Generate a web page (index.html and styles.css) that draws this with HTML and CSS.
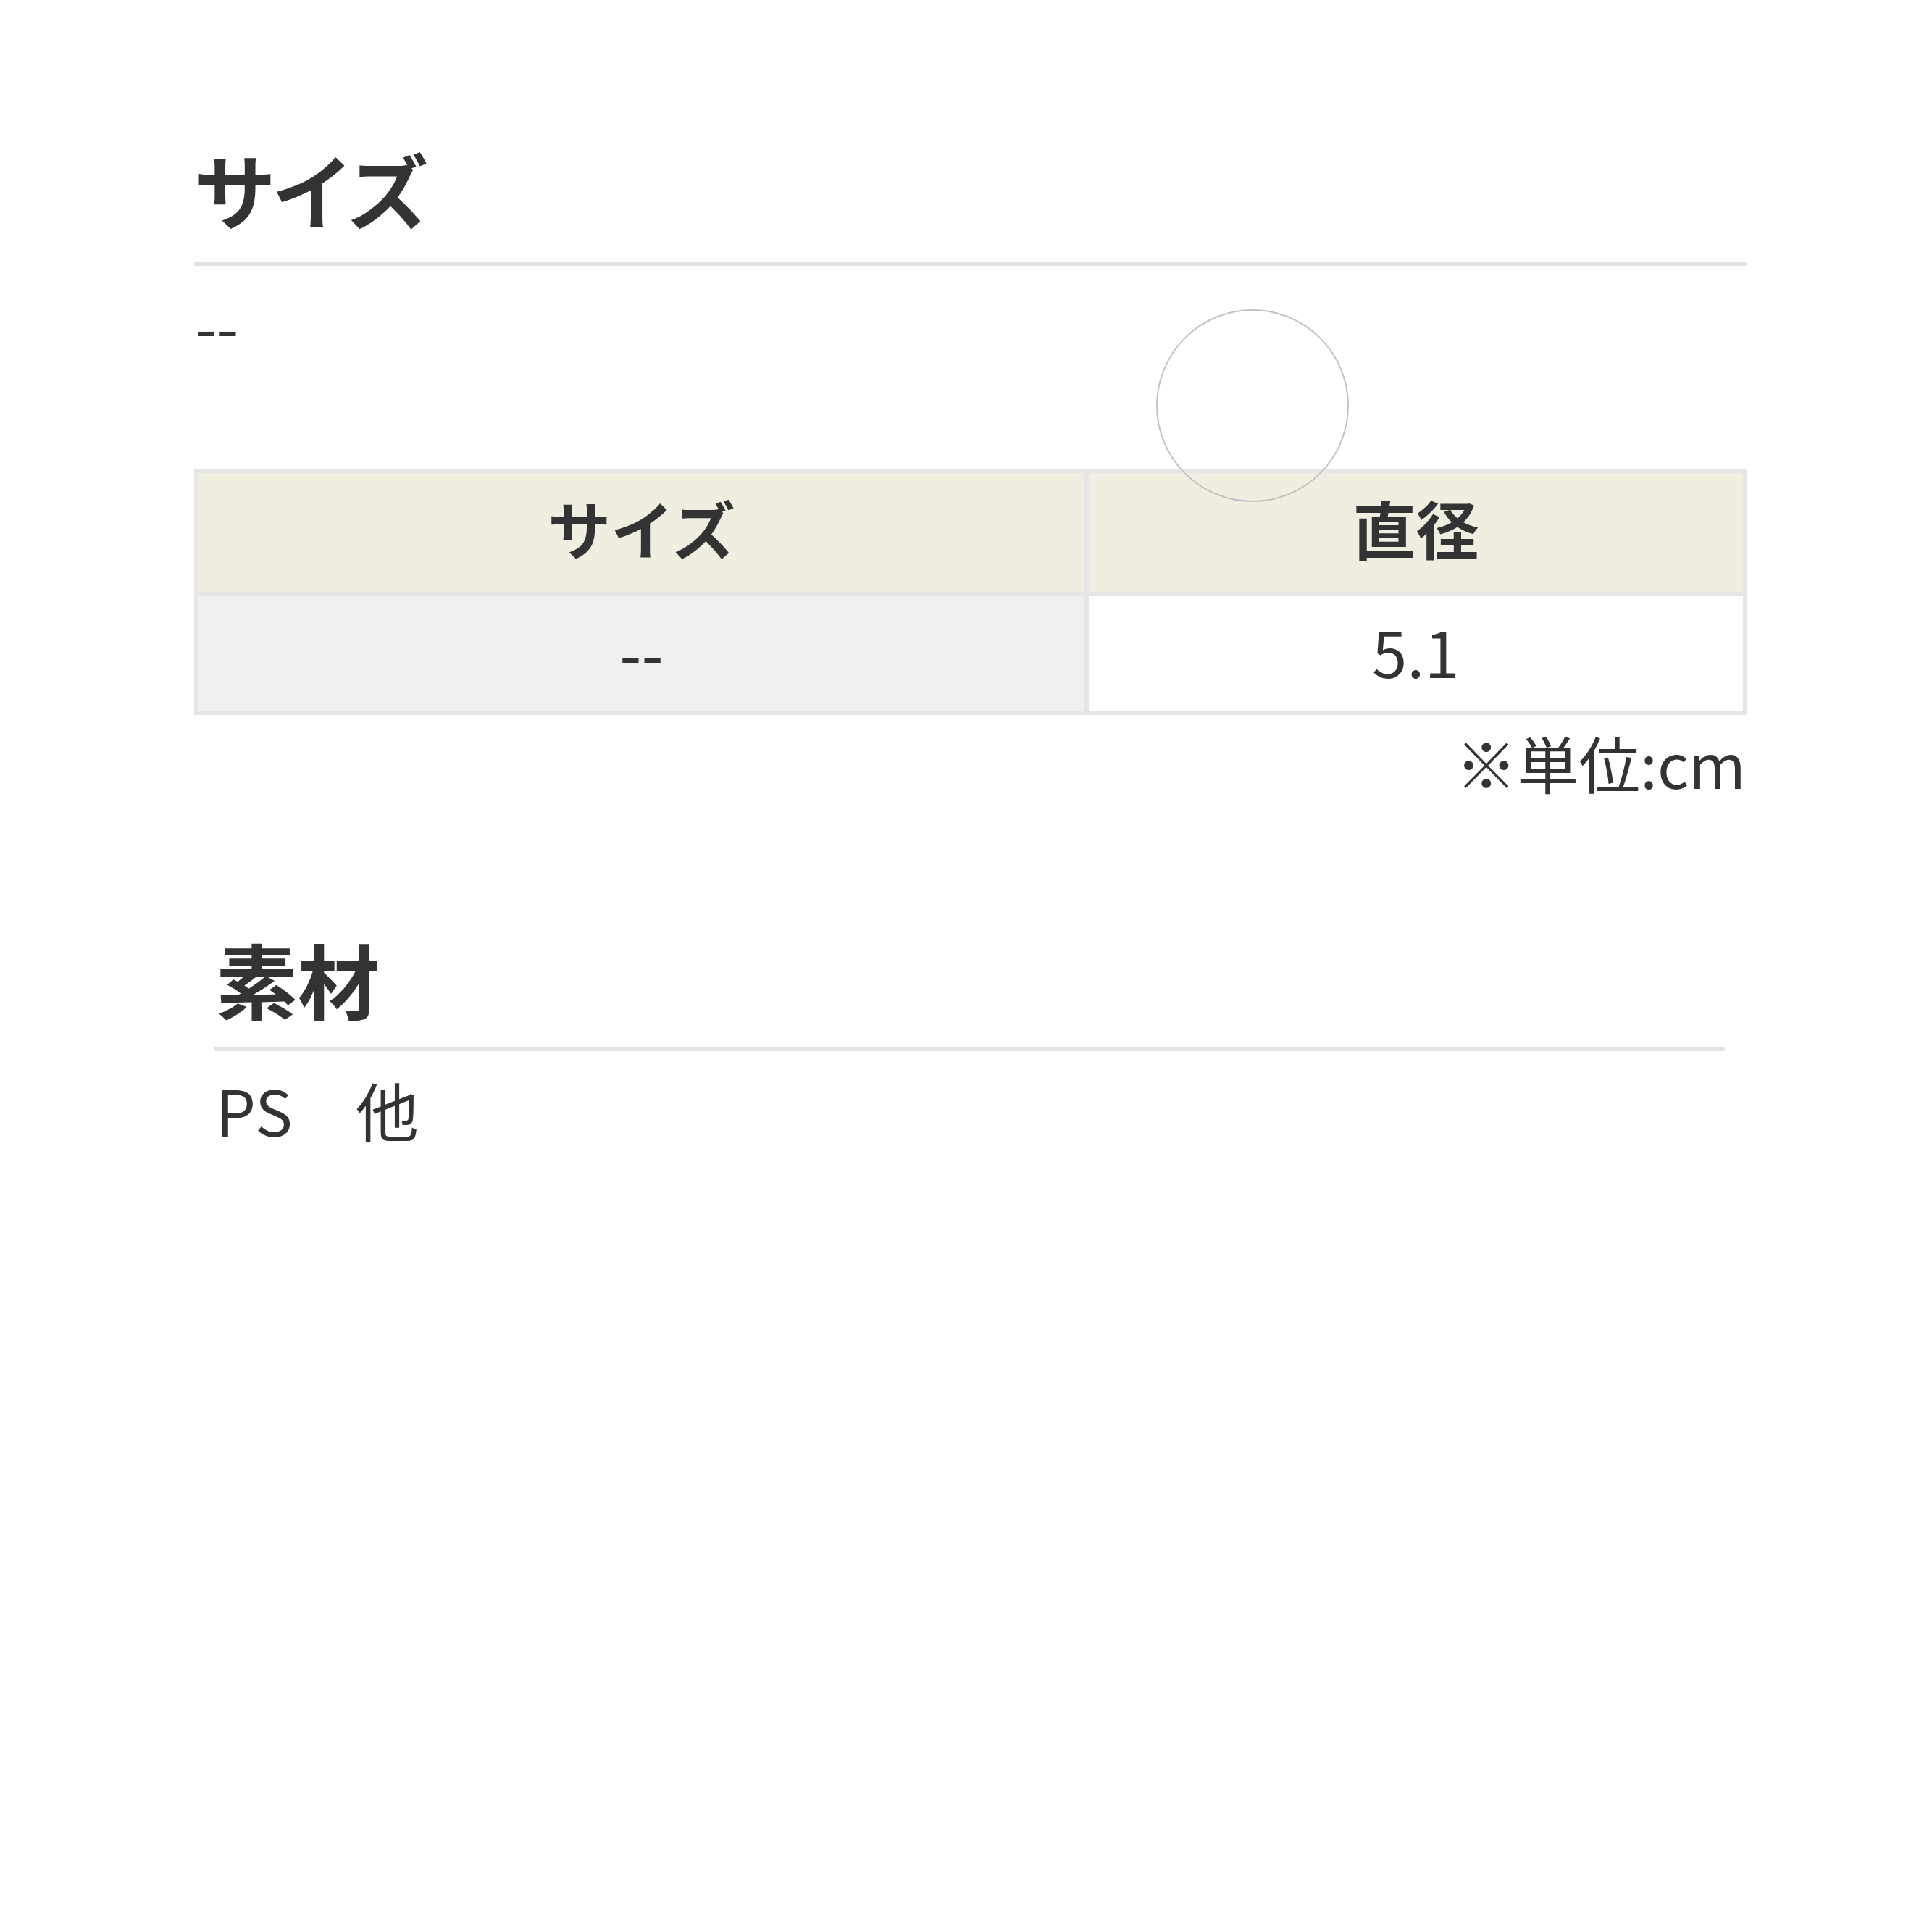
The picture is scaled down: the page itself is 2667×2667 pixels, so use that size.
FILE: index.html
```html
<!DOCTYPE html>
<html lang="ja">
<head>
<meta charset="utf-8">
<title>サイズ・素材</title>
<link rel="stylesheet" href="styles.css">
</head>
<body>
<main class="page">
  <section class="size">
    <h2 class="heading heading-size">サイズ</h2>
    <p class="text text-dash">--</p>
    <table class="spec">
      <thead>
        <tr><th class="col-size">サイズ</th><th class="col-dia">直径</th></tr>
      </thead>
      <tbody>
        <tr><td class="cell-label">--</td><td class="cell-value">5.1</td></tr>
      </tbody>
    </table>
    <p class="unit">※単位:cm</p>
  </section>
  <section class="material">
    <h2 class="heading heading-material">素材</h2>
    <p class="text text-material">PS　他</p>
  </section>
</main>
<div class="touch-ring"></div>
</body>
</html>
```

FILE: styles.css
```css
html, body {
  margin: 0;
  padding: 0;
  background: #ffffff;
}
body {
  font-family: "Noto Sans CJK JP", "Noto Sans", sans-serif;
  color: #333333;
  width: 2667px;
  min-height: 2667px;
  position: relative;
}
.page {
  padding: 187px 0 0 268px;
  width: 2144px;
}
.heading {
  margin: 0;
  font-size: 113px;
  line-height: 144px;
  font-weight: 700;
  color: #333333;
  border-bottom: 6px solid #e3e3e3;
}
.heading-size {
  padding: 0 0 30px 0;
  letter-spacing: -6px;
}
.text {
  margin: 0;
  font-size: 87px;
  line-height: 130px;
}
.text-dash {
  margin-top: 15px;
  padding-left: 1px;
}
.spec {
  margin-top: 135px;
  width: 100%;
  border-collapse: collapse;
  table-layout: fixed;
  font-size: 87px;
  line-height: 130px;
}
.spec th,
.spec td {
  border: 6px solid #e6e6e6;
  text-align: center;
  padding: 0;
}
.spec th {
  background: #efeee0;
  font-weight: 700;
  height: 150px;
  padding-bottom: 14px;
}
.spec td {
  height: 150px;
  padding-bottom: 8px;
}
.col-size {
  width: 57.2%;
}
.cell-label {
  background: #f0f0f0;
}
.cell-value {
  background: #ffffff;
}
.unit {
  margin: 0;
  padding-top: 3px;
  text-align: right;
  font-size: 85px;
  line-height: 124px;
  padding-right: 2px;
}
.material {
  margin-top: 164px;
  padding: 0 31px 0 28px;
}
.heading-material {
  padding: 0 0 23px 2px;
}
.text-material {
  margin-top: 15px;
  padding-left: 2px;
}
.touch-ring {
  position: absolute;
  left: 1596px;
  top: 427px;
  width: 262px;
  height: 262px;
  border: 2px solid #c2c2c2;
  border-radius: 50%;
}
```
